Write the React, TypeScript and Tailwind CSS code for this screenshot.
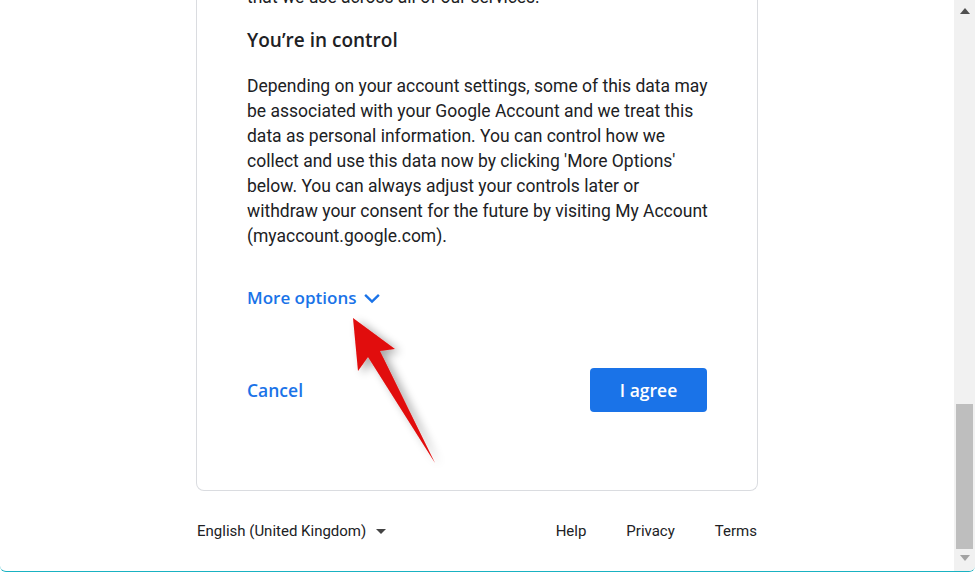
import React from "react";

const gs = { fontFamily: '"Open Sans", "Noto Sans", sans-serif' };

export default function App() {
  return (
    <div className="w-[975px] h-[572px] overflow-hidden flex bg-white border-b border-[#19b2c2] rounded-b-[6px]">
      <div className="flex-1 flex flex-col items-center overflow-hidden" style={{ fontFamily: "Roboto, sans-serif" }}>
        <div className="relative w-[562px] shrink-0 border-x border-b border-[#dadce0] rounded-b-[8px] pl-[50px] pr-[48px] pb-[78px] -mt-[15px] text-[#202124]">
          <p className="text-[17.5px] leading-[25px]">that we use across all of our services.</p>
          <h2 className="mt-[16px] text-[19px] leading-[28px] font-semibold" style={gs}>
            You’re in control
          </h2>
          <p className="mt-[20px] text-[17.5px] leading-[25px]">
            Depending on your account settings, some of this data may be associated with your Google Account and we treat this data as personal information. You can control how we collect and use this data now by clicking 'More Options' below. You can always adjust your controls later or withdraw your consent for the future by visiting My Account (myaccount.google.com).
          </p>
          <div className="mt-[37px] flex items-center h-[24px] text-[#1a73e8] font-semibold text-[17px]" style={gs}>
            <span>More options</span>
            <svg className="ml-[5px]" width="22" height="22" viewBox="0 0 24 24">
              <path d="M4.5 8.5 L12 16 L19.5 8.5" fill="none" stroke="#1a73e8" strokeWidth="2.6" />
            </svg>
          </div>
          <div className="mt-[58px] mr-[2px] flex items-center justify-between">
            <span className="text-[#1a73e8] font-semibold text-[17.5px]" style={gs}>Cancel</span>
            <div className="w-[117px] h-[44px] rounded-[4px] bg-[#1a73e8] text-white font-semibold text-[17.5px] flex items-center justify-center" style={gs}>
              I agree
            </div>
          </div>
        </div>
        <div className="w-[562px] mt-[26px] flex items-center justify-between text-[15px] text-[#202124] leading-[28px]">
          <div className="flex items-center pl-[1px]">
            <span>English (United Kingdom)</span>
            <svg className="ml-[9px]" width="12" height="12" viewBox="0 0 12 12">
              <path d="M1 4 L11 4 L6 9 Z" fill="#444" />
            </svg>
          </div>
          <div className="flex items-center gap-[40px] pr-[1px]">
            <span>Help</span>
            <span>Privacy</span>
            <span>Terms</span>
          </div>
        </div>
      </div>
      <div className="w-[21px] shrink-0 bg-[#f1f1f1] flex flex-col items-center">
        <svg className="mt-[8px]" width="10" height="6" viewBox="0 0 10 6">
          <path d="M0 6 L5 0 L10 6 Z" fill="#505050" />
        </svg>
        <div className="flex-1" />
        <div className="w-[17px] h-[145px] bg-[#bebebe]" />
        <svg className="mt-[6px] mb-[10px]" width="10" height="6" viewBox="0 0 10 6">
          <path d="M0 0 L10 0 L5 6 Z" fill="#a3a3a3" />
        </svg>
      </div>
      <svg className="absolute left-0 top-0 pointer-events-none" width="975" height="572" viewBox="0 0 975 572">
        <defs>
          <filter id="sh" x="-50%" y="-50%" width="200%" height="200%">
            <feGaussianBlur in="SourceAlpha" stdDeviation="5" />
            <feOffset dx="5" dy="3" result="b" />
            <feComponentTransfer>
              <feFuncA type="linear" slope="0.35" />
            </feComponentTransfer>
            <feMerge>
              <feMergeNode />
              <feMergeNode in="SourceGraphic" />
            </feMerge>
          </filter>
        </defs>
        <polygon
          points="353,318 395,349 380,351 435,463 368,357 358,371"
          fill="#e10a0a"
          filter="url(#sh)"
        />
      </svg>
    </div>
  );
}
